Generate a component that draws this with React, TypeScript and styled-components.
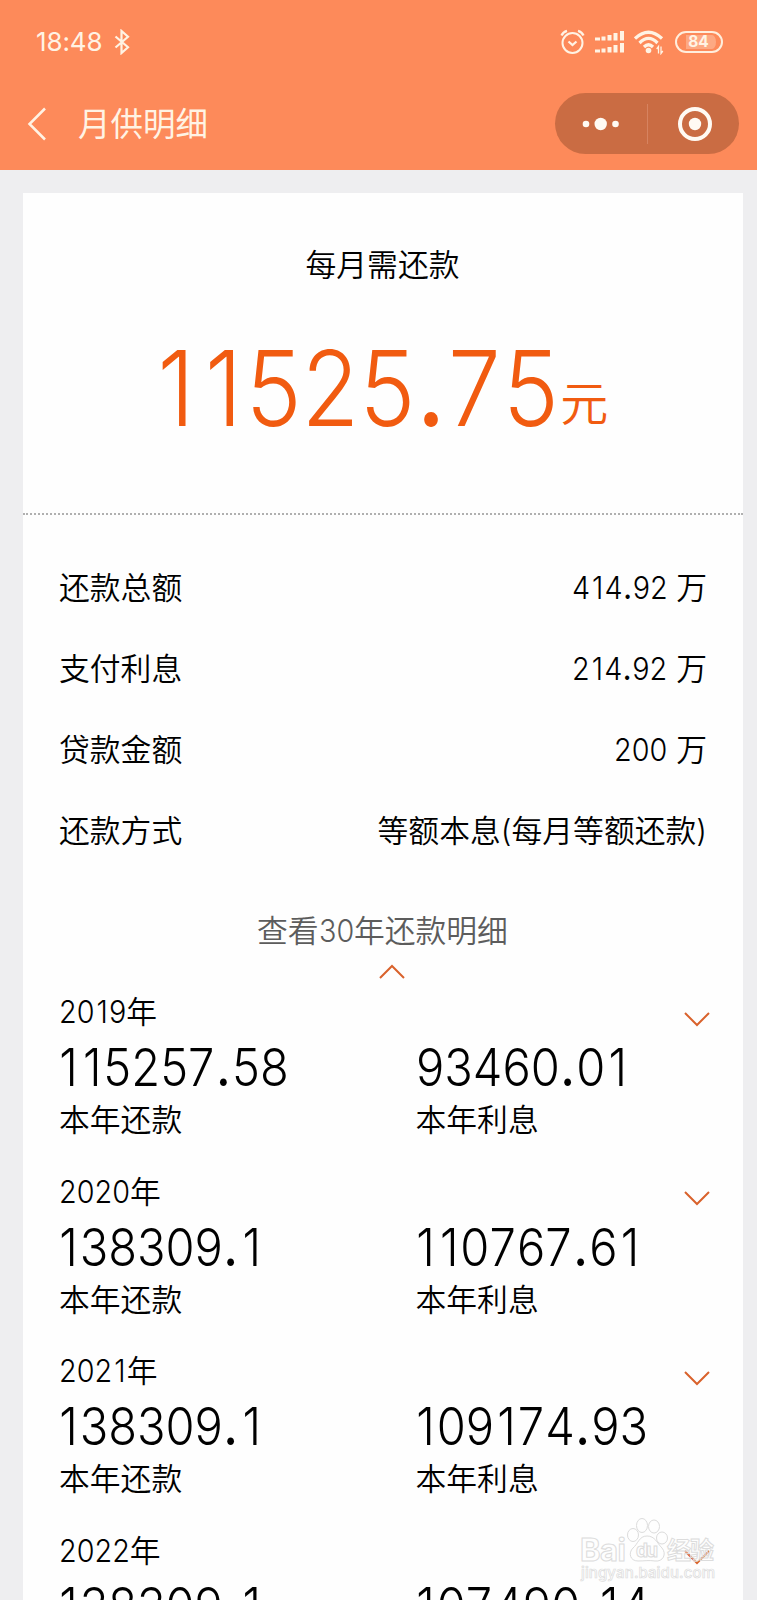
import React from "react";
import styled, { createGlobalStyle } from "styled-components";

const GlobalStyle = createGlobalStyle`
  * { box-sizing: border-box; }
  body {
    margin: 0;
    background: #eeeef0;
    font-family: Inter, "Noto Sans CJK SC", sans-serif;
    font-weight: 350;
    font-kerning: none;
    color: #000;
  }
`;

const Screen = styled.div`
  position: relative;
  width: 757px;
  height: 1600px;
  overflow: hidden;
  background: #eeeef0;
`;

const Header = styled.header`
  height: 170px;
  background: #fd8a5a;
  color: #fff3e4;
`;

const StatusBar = styled.div`
  display: flex;
  align-items: center;
  justify-content: space-between;
  height: 84px;
  padding: 0 34px 0 36px;
`;

const StatusGroup = styled.div<{ $gap: number }>`
  display: flex;
  align-items: center;
  gap: ${(p) => p.$gap}px;
`;

const Clock = styled.span`
  font-size: 26px;
  font-weight: 400;
  line-height: 34px;
  letter-spacing: -0.1px;
`;

const Battery = styled.span`
  display: flex;
  align-items: center;
  justify-content: center;
  width: 48px;
  height: 22px;
  margin-left: 2px;
  border: 2px solid #ffeedd;
  border-radius: 11px;
  background: #fda983;
  background-clip: content-box;
  padding: 2px 5px 2px 9px;
  font-size: 15.5px;
  font-weight: 700;
  line-height: 14px;
  text-indent: -5px;
`;

const NavBar = styled.div`
  display: flex;
  align-items: center;
  height: 79px;
  padding: 0 18px 0 27px;
`;

const NavTitle = styled.h1`
  flex: 1;
  margin: 2px 0 0 31px;
  font-size: 32.5px;
  font-weight: 400;
  line-height: 40px;
`;

const Capsule = styled.div`
  display: grid;
  grid-template-columns: 92.5px 1fr;
  align-items: center;
  width: 184px;
  height: 61px;
  border-radius: 31px;
  background: #ca6c43;
`;

const CapsuleButton = styled.button<{ $divided?: boolean }>`
  display: flex;
  align-items: center;
  justify-content: center;
  height: 40px;
  padding: ${(p) => (p.$divided ? "0" : "0 0 0 3px")};
  border: 0;
  border-right: ${(p) => (p.$divided ? "1px solid #d78360" : "0")};
  background: none;
`;

const Card = styled.main`
  width: 720px;
  height: 1500px;
  margin: 23px 0 0 22.5px;
  background: #fefefe;
`;

const Summary = styled.section`
  display: flex;
  flex-direction: column;
  align-items: center;
  height: 322px;
  padding-top: 52px;
  border-bottom: 2px dotted #b0b0b0;
`;

const SummaryLabel = styled.div`
  font-size: 30.8px;
  line-height: 40px;
`;

const Amount = styled.div`
  display: flex;
  margin-top: 42.5px;
  font-size: 104px;
  line-height: 120px;
  color: #f15b10;
  white-space: nowrap;
`;

const AmountUnit = styled.span`
  align-self: flex-end;
  margin-left: 2px;
  margin-bottom: 24px;
  font-size: 48px;
  line-height: 40px;
`;

const Condensed = styled.span<{ $width: number; $scale: number; $outdent: boolean }>`
  display: inline-block;
  margin-left: ${(p) => (p.$outdent ? -0.055 : 0)}em;
  margin-right: ${(p) => (p.$scale - 1) * p.$width}em;
  transform: scaleX(${(p) => p.$scale});
  transform-origin: left center;
  white-space: nowrap;
`;

const SpacedGlyph = styled.span<{ $left: number; $right: number; $heavy?: boolean }>`
  padding: 0 ${(p) => p.$right}em 0 ${(p) => p.$left}em;
  font-weight: ${(p) => (p.$heavy ? 500 : "inherit")};
`;

const DetailList = styled.section`
  padding: 32px 35.5px 0 36.5px;
`;

const DetailRow = styled.div`
  display: flex;
  align-items: center;
  justify-content: space-between;
  height: 81px;
  font-size: 30.8px;
  line-height: 40px;
`;

const ExpandToggle = styled.div`
  display: flex;
  flex-direction: column;
  align-items: center;
  height: 121px;
  padding-top: 40px;
  font-size: 30.8px;
  line-height: 40px;
  color: #5c5c5c;
`;

const Chevron = styled.svg`
  display: block;
  width: 26px;
  height: 16px;
  fill: none;
  stroke: #d9622c;
  stroke-width: 2;
`;

const ToggleChevron = styled(Chevron)`
  margin: 13px 0 0 19px;
`;

const YearBlock = styled.section`
  height: 179.5px;
  padding: 0 33px 0 36.5px;
`;

const YearHeading = styled.div`
  display: flex;
  justify-content: space-between;
  align-items: center;
  height: 40px;
  font-size: 30.8px;
  line-height: 40px;
`;

const YearChevron = styled(Chevron)`
  margin-top: 13px;
`;

const YearFigures = styled.div`
  display: grid;
  grid-template-columns: 356.5px 1fr;
`;

const Figure = styled.div`
  height: 68px;
  padding-top: 2px;
  font-size: 52px;
  line-height: 68px;
  white-space: nowrap;
`;

const FigureCaption = styled.div`
  font-size: 30.8px;
  line-height: 40px;
`;

const Watermark = styled.div`
  position: absolute;
  left: 578px;
  top: 1516px;
  width: 145px;
  height: 66px;
`;

const details = [
  { label: "还款总额", amount: "414.92", unit: " 万" },
  { label: "支付利息", amount: "214.92", unit: " 万" },
  { label: "贷款金额", amount: "200", unit: " 万" },
  { label: "还款方式", amount: "", unit: "等额本息(每月等额还款)" },
];

const years = [
  { year: 2019, paid: "115257.58", interest: "93460.01" },
  { year: 2020, paid: "138309.1", interest: "110767.61" },
  { year: 2021, paid: "138309.1", interest: "109174.93" },
  { year: 2022, paid: "138309.1", interest: "107490.14" },
];

const bearings: Record<string, { advance: number; left: number; right: number }> = {
  "1": { advance: 0.494, left: 0.07, right: 0.04 },
  "7": { advance: 0.614, left: 0, right: 0.025 },
  ".": { advance: 0.35, left: 0.015, right: 0.03 },
};

// Condensed numerals; display sizes are a little narrower than body text.
function Numerals({ value, small = false }: { value: string; small?: boolean }) {
  const chars = value.split("");
  const width = chars.reduce((sum, c) => sum + (bearings[c]?.advance ?? 0.614), 0);
  return (
    <Condensed $width={width} $scale={small ? 0.935 : 0.905} $outdent={value.startsWith("1")}>
      {chars.map((c, i) => {
        const b = bearings[c];
        return b ? (
          <SpacedGlyph key={i} $left={b.left} $right={b.right} $heavy={c === "."}>
            {c}
          </SpacedGlyph>
        ) : (
          c
        );
      })}
    </Condensed>
  );
}

function BluetoothIcon() {
  return (
    <svg width="16" height="26" viewBox="0 0 16 26" fill="none" stroke="currentColor" strokeWidth="2.2">
      <path d="M1.5 7.5 14 18.2 7.5 24V2L14 7.8 1.5 18.5" />
    </svg>
  );
}

function AlarmIcon() {
  return (
    <svg width="26" height="26" viewBox="0 0 26 26" fill="none" stroke="currentColor" strokeWidth="2">
      <circle cx="12.500" cy="14" r="10" />
      <path strokeWidth="2.300" d="M8.500 12.500 12.500 16l4-3.500M1.500 6.500Q3 3 7 1.800M23.500 6.500Q22 3 18 1.800" />
    </svg>
  );
}

function SignalIcon() {
  return (
    <svg width="30" height="24" viewBox="0 0 30 24" fill="currentColor">
      <path d="M0 7.500h5v3H0zM6.500 6.500h4v4h-4zM12.500 5h4v5.500h-4zM18.500 3h4v7.500h-4zM25 1h4v9.500h-4zM0 19.500h5v3H0zM6.500 18.500h4v4h-4zM12.500 17h4v5.500h-4zM18.500 15h4v7.500h-4zM25 13h4v9.500h-4z" />
    </svg>
  );
}

function WifiIcon() {
  return (
    <svg width="30" height="26" viewBox="0 0 30 26" fill="none" stroke="currentColor" strokeWidth="3.200">
      <path d="M1 9.500Q14.500-3 28 9.500M5.500 14Q14.500 5 23.500 14M10 18Q14.500 13.500 19 18" />
      <circle cx="14.500" cy="21.500" r="2.800" fill="currentColor" stroke="none" />
      <path strokeWidth="1.300" d="M24.500 24.500v-7l-1.800 2.500M27 17.500v7l1.800-2.500" />
    </svg>
  );
}

function PawWatermark() {
  const outline = {
    fill: "#fefefe",
    fillOpacity: 0.35,
    stroke: "#dcdcdc",
    strokeWidth: 1,
    fontFamily: 'Inter, "Noto Sans CJK SC", sans-serif',
  };
  return (
    <svg width="145" height="66" viewBox="0 0 145 66">
      <g {...outline}>
        <text x="2" y="45" fontSize="31" fontWeight="700" textLength="46">Bai</text>
        <ellipse cx="55" cy="19" rx="5.500" ry="6.500" />
        <ellipse cx="64" cy="9.500" rx="5.500" ry="7" />
        <ellipse cx="76" cy="10.500" rx="5.500" ry="6.500" />
        <ellipse cx="84" cy="22" rx="5.500" ry="6" />
        <path d="M69 20c-8 0-9 8-14 12-5 5-3 13 5 13 7 0 11-1 17 0 8 1 12-7 7-13-5-5-7-12-15-12z" />
        <text x="58" y="41" fontSize="19" fontWeight="700" textLength="22">du</text>
        <text x="89" y="43" fontSize="24" fontWeight="700" textLength="47">经验</text>
        <text x="3" y="61.500" fontSize="15" fontWeight="500" strokeWidth="0.700" textLength="134">jingyan.baidu.com</text>
      </g>
    </svg>
  );
}

export default function App() {
  return (
    <Screen>
      <GlobalStyle />
      <Header>
        <StatusBar>
          <StatusGroup $gap={11}>
            <Clock>18:48</Clock>
            <BluetoothIcon />
          </StatusGroup>
          <StatusGroup $gap={9}>
            <AlarmIcon />
            <SignalIcon />
            <WifiIcon />
            <Battery>84</Battery>
          </StatusGroup>
        </StatusBar>
        <NavBar>
          <svg width="20" height="34" viewBox="0 0 20 34" fill="none" stroke="currentColor" strokeWidth="2.500">
            <path d="M18 1.500 2.500 17 18 32.500" />
          </svg>
          <NavTitle>月供明细</NavTitle>
          <Capsule>
            <CapsuleButton $divided aria-label="更多">
              <svg width="38" height="14" viewBox="0 0 38 14" fill="#fffaf3">
                <circle cx="4" cy="7" r="3.300" />
                <circle cx="18.700" cy="7" r="6.200" />
                <circle cx="33.500" cy="7" r="3.300" />
              </svg>
            </CapsuleButton>
            <CapsuleButton aria-label="关闭">
              <svg width="36" height="36" viewBox="0 0 36 36" fill="#fffaf3">
                <circle cx="18" cy="18" r="15" fill="none" stroke="#fffaf3" strokeWidth="4" />
                <circle cx="18" cy="18" r="6.200" />
              </svg>
            </CapsuleButton>
          </Capsule>
        </NavBar>
      </Header>
      <Card>
        <Summary>
          <SummaryLabel>每月需还款</SummaryLabel>
          <Amount>
            <Numerals value="11525.75" />
            <AmountUnit>元</AmountUnit>
          </Amount>
        </Summary>
        <DetailList>
          {details.map((d) => (
            <DetailRow key={d.label}>
              <span>{d.label}</span>
              <span>
                {d.amount && <Numerals small value={d.amount} />}
                {d.unit}
              </span>
            </DetailRow>
          ))}
        </DetailList>
        <ExpandToggle>
          <span>
            查看
            <Numerals small value="30" />
            年还款明细
          </span>
          <ToggleChevron viewBox="0 0 26 16">
            <path d="M1 14 13 2l12 12" />
          </ToggleChevron>
        </ExpandToggle>
        {years.map((y) => (
          <YearBlock key={y.year}>
            <YearHeading>
              <span>
                <Numerals small value={String(y.year)} />年
              </span>
              <YearChevron viewBox="0 0 26 16">
                <path d="M1 2l12 12L25 2" />
              </YearChevron>
            </YearHeading>
            <YearFigures>
              <Figure>
                <Numerals value={y.paid} />
              </Figure>
              <Figure>
                <Numerals value={y.interest} />
              </Figure>
              <FigureCaption>本年还款</FigureCaption>
              <FigureCaption>本年利息</FigureCaption>
            </YearFigures>
          </YearBlock>
        ))}
      </Card>
      <Watermark>
        <PawWatermark />
      </Watermark>
    </Screen>
  );
}
